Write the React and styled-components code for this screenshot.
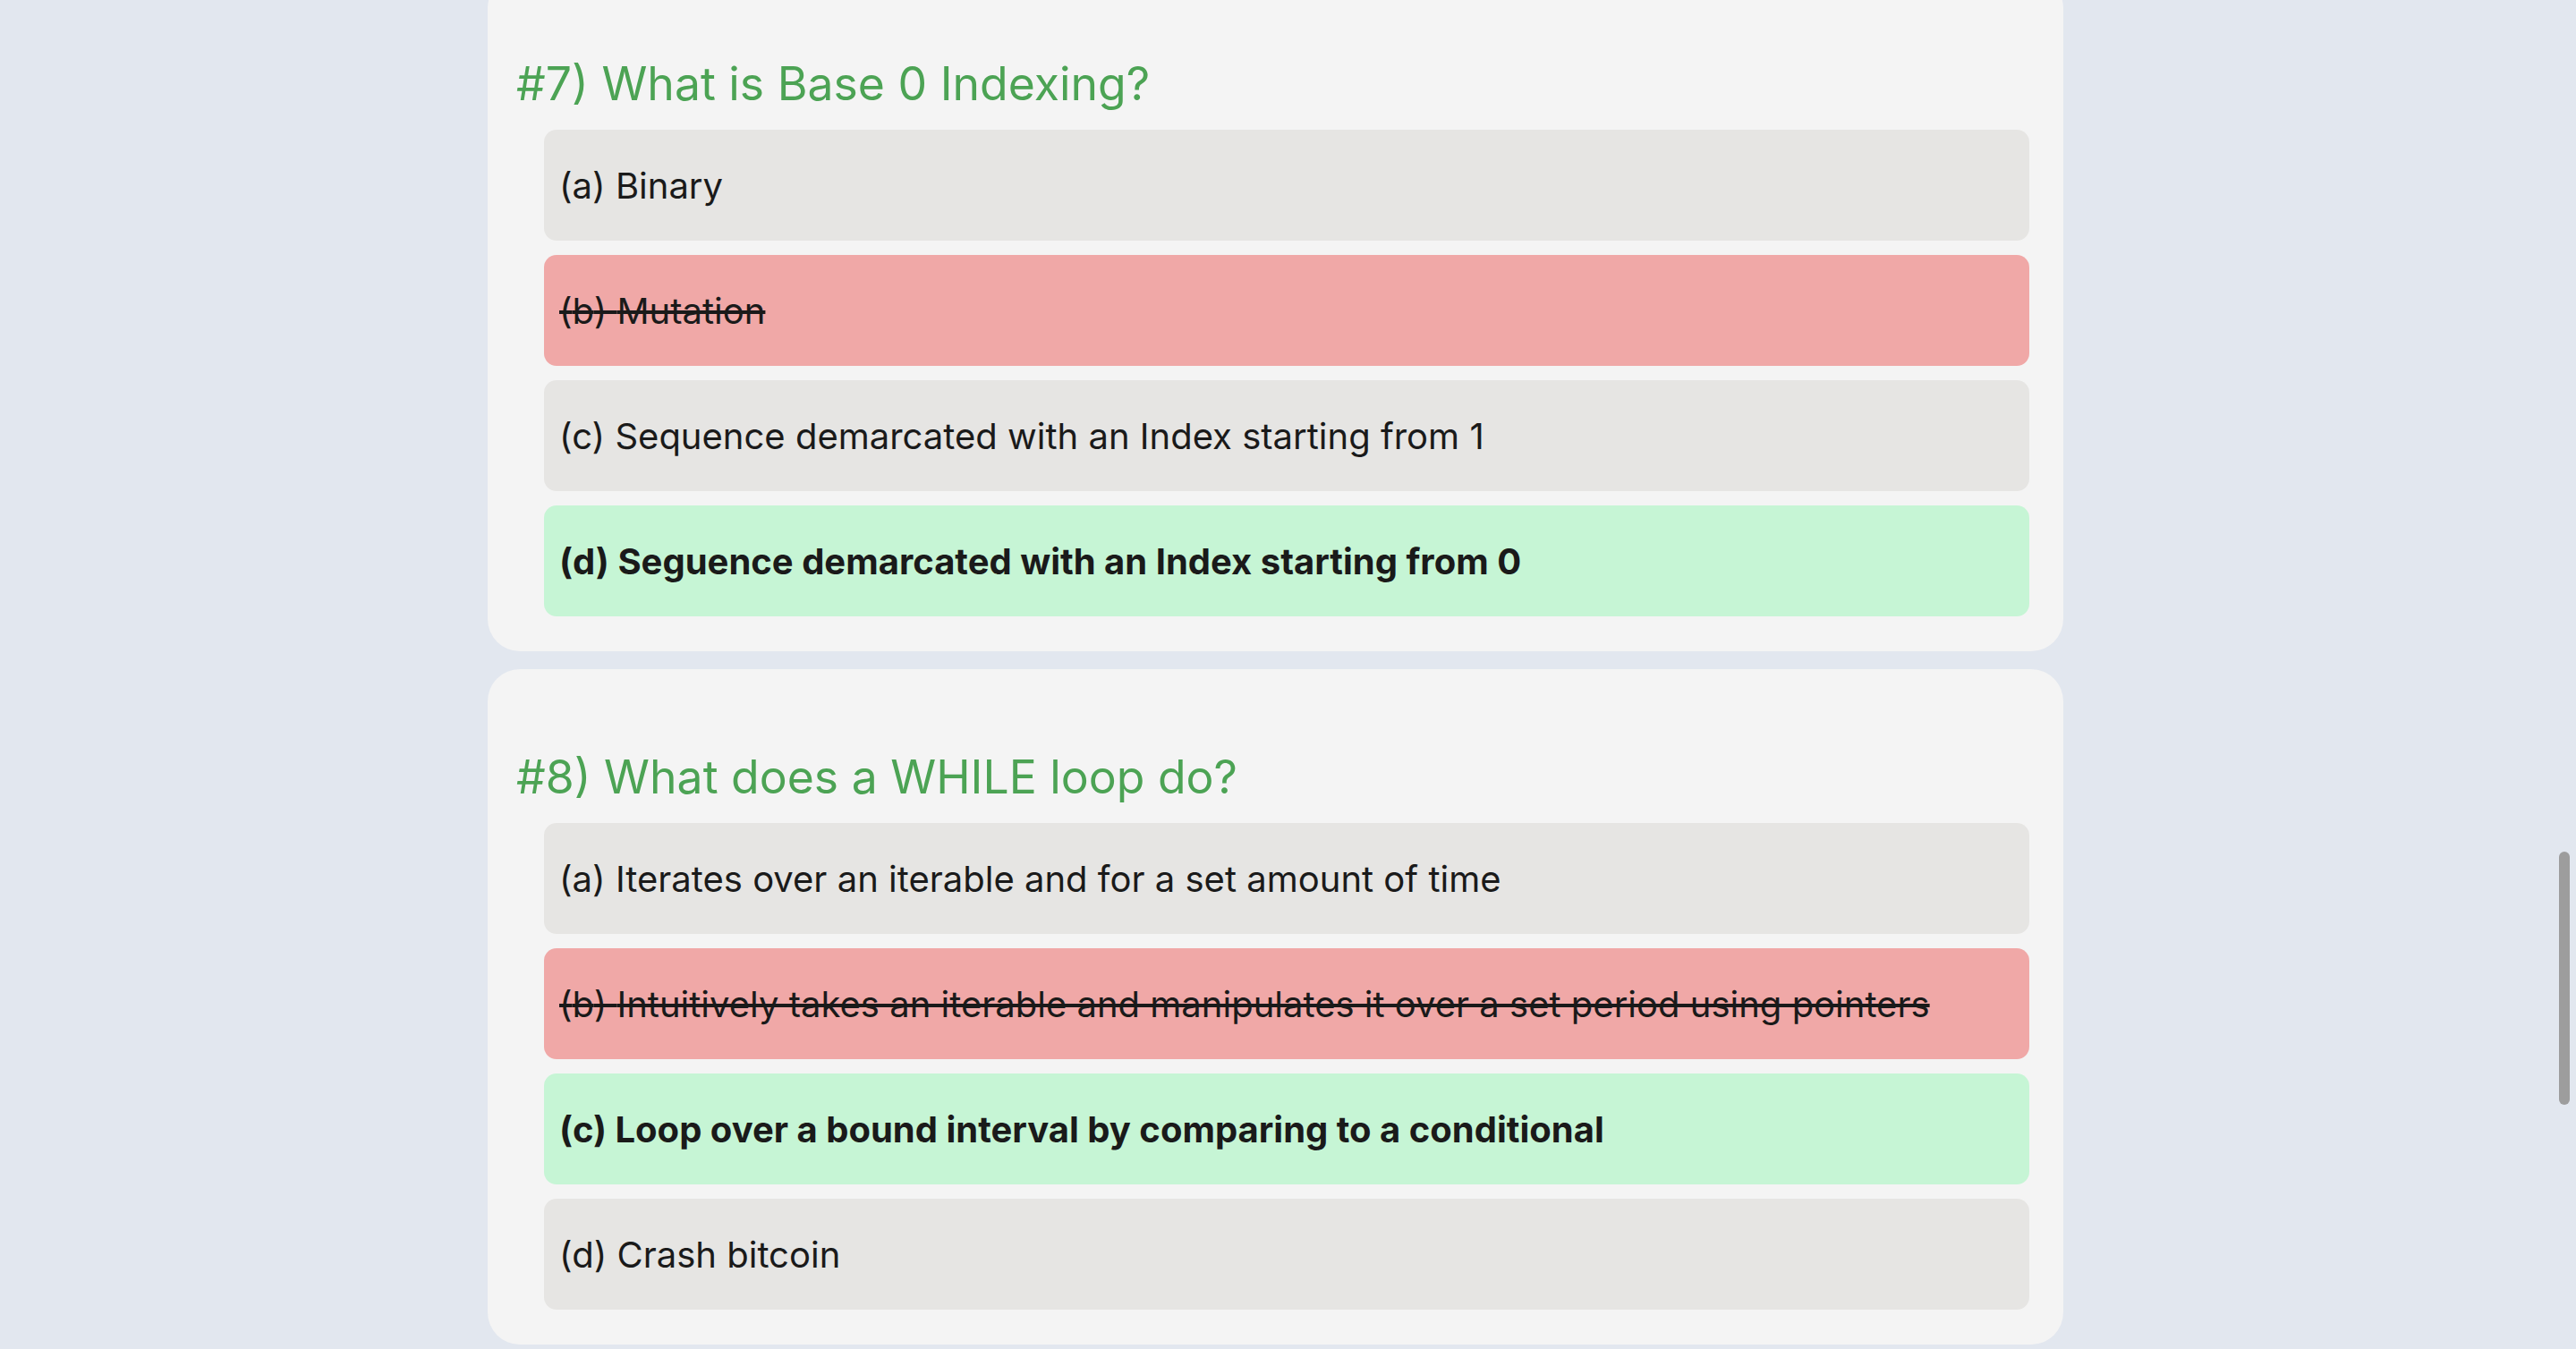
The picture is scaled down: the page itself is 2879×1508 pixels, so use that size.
import React from 'react';
import styled, { createGlobalStyle } from 'styled-components';

const GlobalStyle = createGlobalStyle`
  html, body {
    margin: 0;
    padding: 0;
    background: #e2e7ef;
    overflow: hidden;
  }
  body {
    font-family: Inter, 'Noto Sans', 'Liberation Sans', sans-serif;
    color: #1a1a1a;
  }
`;

const Page = styled.div`
  height: 1508px;
  overflow: hidden;
  padding-left: 545px;
`;

const QuizList = styled.div`
  width: 1761px;
  margin-top: -27px;
  display: flex;
  flex-direction: column;
  gap: 20px;
`;

const QuestionCard = styled.section`
  background: #f4f4f4;
  border-radius: 36px;
  padding: 89px 38px 39px 32px;
`;

const QuestionTitle = styled.h2`
  margin: 0 0 21px 0;
  font-size: 51.7px;
  font-weight: 400;
  line-height: normal;
  color: #4ca354;
`;

const Options = styled.div`
  margin-left: 31px;
  display: flex;
  flex-direction: column;
  gap: 16px;
`;

const optionBg = {
  neutral: '#e6e5e3',
  wrong: '#f0a8a7',
  right: '#c6f5d5',
};

const Option = styled.div`
  height: 124px;
  display: flex;
  align-items: center;
  padding: 0 17px;
  border-radius: 14px;
  background: ${(p) => optionBg[p.$state]};
  font-size: 40px;
  font-weight: ${(p) => (p.$state === 'right' ? 700 : 400)};
  text-decoration: ${(p) => (p.$state === 'wrong' ? 'line-through' : 'none')};
  color: #1a1a1a;
`;

const ScrollThumb = styled.div`
  position: fixed;
  left: 2860px;
  top: 952px;
  width: 12px;
  height: 283px;
  border-radius: 6px;
  background: #9d9d9d;
`;

const questions = [
  {
    number: 7,
    text: 'What is Base 0 Indexing?',
    options: [
      { label: 'a', text: 'Binary', state: 'neutral' },
      { label: 'b', text: 'Mutation', state: 'wrong' },
      { label: 'c', text: 'Sequence demarcated with an Index starting from 1', state: 'neutral' },
      { label: 'd', text: 'Seguence demarcated with an Index starting from 0', state: 'right' },
    ],
  },
  {
    number: 8,
    text: 'What does a WHILE loop do?',
    options: [
      { label: 'a', text: 'Iterates over an iterable and for a set amount of time', state: 'neutral' },
      { label: 'b', text: 'Intuitively takes an iterable and manipulates it over a set period using pointers', state: 'wrong' },
      { label: 'c', text: 'Loop over a bound interval by comparing to a conditional', state: 'right' },
      { label: 'd', text: 'Crash bitcoin', state: 'neutral' },
    ],
  },
];

const App = () => (
  <>
    <GlobalStyle />
    <Page>
      <QuizList>
        {questions.map((q) => (
          <QuestionCard key={q.number}>
            <QuestionTitle>
              #{q.number}) {q.text}
            </QuestionTitle>
            <Options>
              {q.options.map((o) => (
                <Option key={o.label} $state={o.state}>
                  ({o.label}) {o.text}
                </Option>
              ))}
            </Options>
          </QuestionCard>
        ))}
      </QuizList>
    </Page>
    <ScrollThumb />
  </>
);

export default App;
